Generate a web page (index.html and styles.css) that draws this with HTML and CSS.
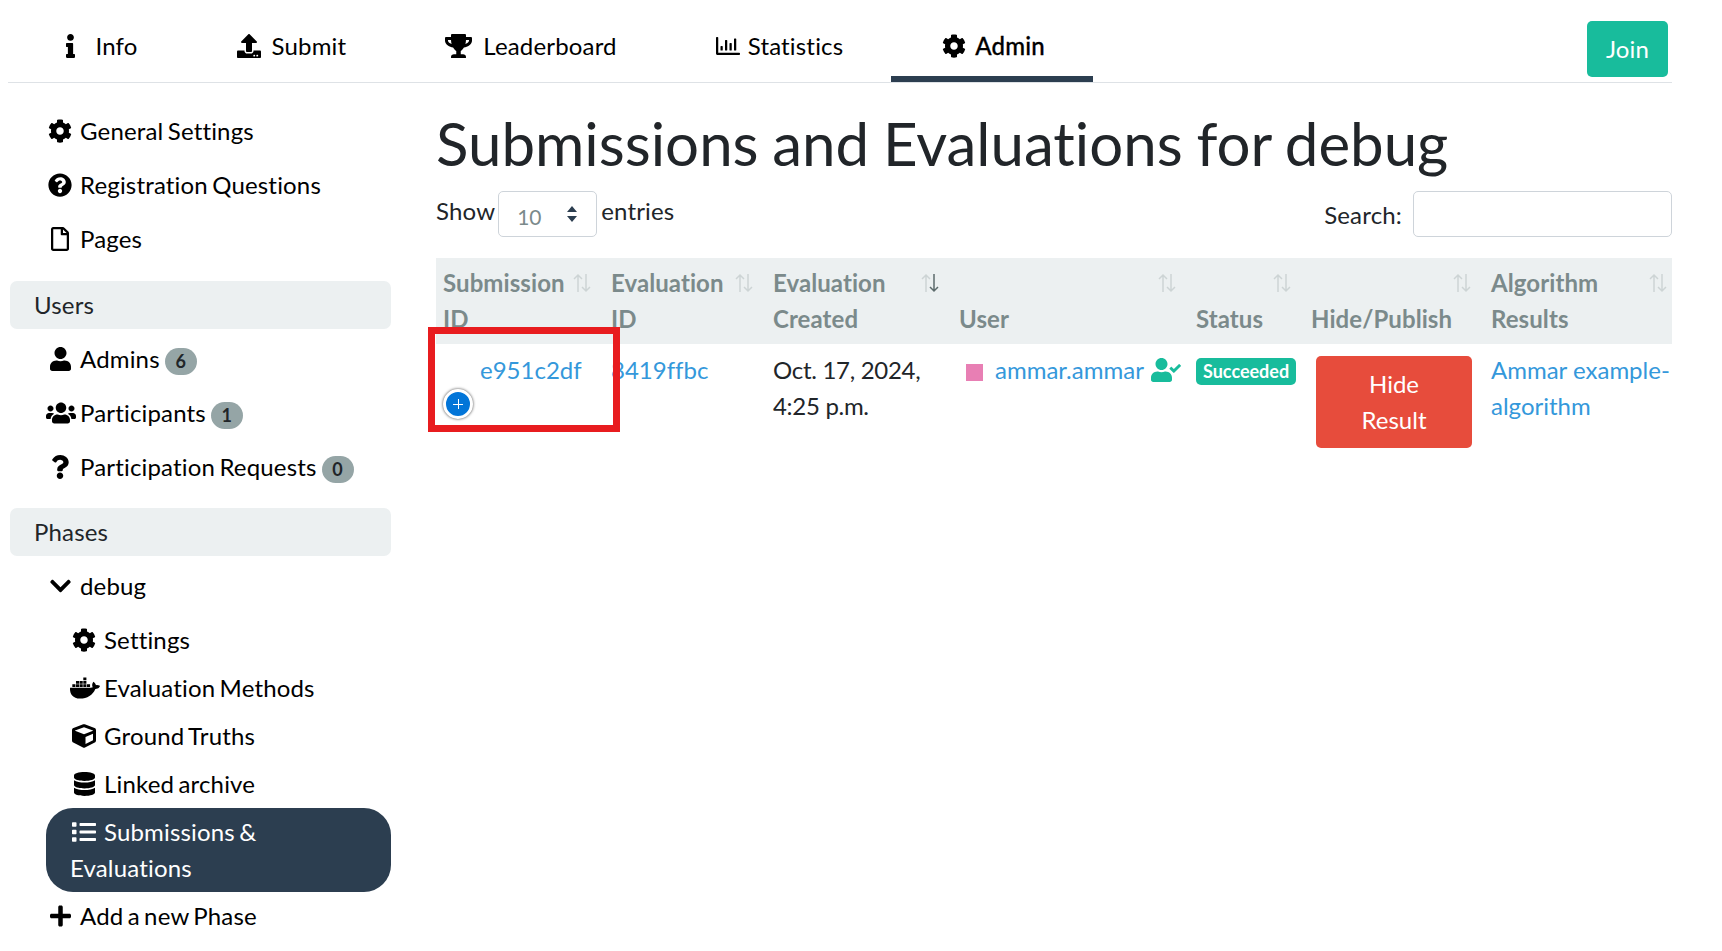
FILE: index.html
```html
<!DOCTYPE html>
<html lang="en">
<head>
<meta charset="utf-8">
<title>Submissions and Evaluations for debug</title>
<link rel="stylesheet" href="styles.css">
</head>
<body>
<svg class="defs" aria-hidden="true">
<defs>
<path id="cog" d="M487.4 315.7l-42.6-24.6c4.3-23.2 4.3-47 0-70.2l42.6-24.6c4.9-2.8 7.1-8.6 5.5-14-11.1-35.6-30-67.8-54.7-94.6-3.8-4.1-10-5.1-14.8-2.3L380.8 110c-17.9-15.4-38.5-27.3-60.8-35.1V25.8c0-5.6-3.9-10.5-9.4-11.7-36.7-8.2-74.3-7.8-109.2 0-5.5 1.2-9.4 6.1-9.4 11.7V75c-22.2 7.9-42.8 19.8-60.8 35.1L88.7 85.5c-4.9-2.8-11-1.9-14.8 2.3-24.7 26.7-43.6 58.9-54.7 94.6-1.7 5.4.6 11.2 5.5 14L67.3 221c-4.3 23.2-4.3 47 0 70.2l-42.6 24.6c-4.9 2.8-7.1 8.6-5.5 14 11.1 35.6 30 67.8 54.7 94.6 3.8 4.1 10 5.1 14.8 2.3l42.6-24.6c17.9 15.4 38.5 27.3 60.8 35.1v49.2c0 5.6 3.9 10.5 9.4 11.7 36.7 8.2 74.3 7.8 109.2 0 5.5-1.2 9.4-6.1 9.4-11.7v-49.2c22.2-7.9 42.8-19.8 60.8-35.1l42.6 24.6c4.9 2.8 11 1.9 14.8-2.3 24.7-26.7 43.6-58.9 54.7-94.6 1.5-5.5-.7-11.3-5.6-14.1zM256 336c-44.1 0-80-35.9-80-80s35.9-80 80-80 80 35.9 80 80-35.9 80-80 80z"/>
<path id="info" d="M20 424.229h20V279.771H20c-11.046 0-20-8.954-20-20V212c0-11.046 8.954-20 20-20h112c11.046 0 20 8.954 20 20v212.229h20c11.046 0 20 8.954 20 20V492c0 11.046-8.954 20-20 20H20c-11.046 0-20-8.954-20-20v-47.771c0-11.046 8.954-20 20-20zM96 0C56.235 0 24 32.235 24 72s32.235 72 72 72 72-32.235 72-72S135.764 0 96 0z"/>
<path id="upload" d="M296 384h-80c-13.3 0-24-10.7-24-24V192h-87.7c-17.8 0-26.7-21.5-14.1-34.1L242.3 5.7c7.5-7.5 19.8-7.5 27.3 0l152.2 152.2c12.6 12.6 3.7 34.1-14.1 34.1H320v168c0 13.3-10.7 24-24 24zm216-8v112c0 13.3-10.7 24-24 24H24c-13.3 0-24-10.7-24-24V376c0-13.3 10.7-24 24-24h136v8c0 30.9 25.1 56 56 56h80c30.9 0 56-25.1 56-56v-8h136c13.3 0 24 10.7 24 24zm-124 88c0-11-9-20-20-20s-20 9-20 20 9 20 20 20 20-9 20-20zm64 0c0-11-9-20-20-20s-20 9-20 20 9 20 20 20 20-9 20-20z"/>
<path id="trophy" d="M552 64H448V24c0-13.3-10.7-24-24-24H152c-13.3 0-24 10.7-24 24v40H24C10.7 64 0 74.7 0 88v56c0 35.7 22.5 72.4 61.9 100.7 31.5 22.7 69.8 37.1 110 41.7C203.3 338.5 240 360 240 360v72h-48c-35.3 0-64 20.7-64 56v12c0 6.6 5.4 12 12 12h296c6.6 0 12-5.4 12-12v-12c0-35.3-28.7-56-64-56h-48v-72s36.7-21.5 68.1-73.6c40.3-4.6 78.6-19 110-41.7 39.3-28.3 61.9-65 61.9-100.7V88c0-13.3-10.7-24-24-24zM99.3 192.8C74.9 175.2 64 155.6 64 144v-16h64.2c1 32.6 5.8 61.2 12.8 86.2-15.1-5.2-29.2-12.4-41.7-21.4zM512 144c0 16.1-17.7 36.1-35.3 48.8-12.5 9-26.7 16.2-41.8 21.4 7-25 11.8-53.6 12.8-86.2H512v16z"/>
<path id="chart" d="M396.8 352h22.4c6.4 0 12.8-6.4 12.8-12.8V108.8c0-6.4-6.4-12.8-12.8-12.8h-22.4c-6.4 0-12.8 6.4-12.8 12.8v230.4c0 6.4 6.4 12.8 12.8 12.8zm-192 0h22.4c6.4 0 12.8-6.4 12.8-12.8V140.8c0-6.4-6.4-12.8-12.8-12.8h-22.4c-6.4 0-12.8 6.4-12.8 12.8v198.4c0 6.4 6.4 12.8 12.8 12.8zm96 0h22.4c6.4 0 12.8-6.4 12.8-12.8V204.8c0-6.4-6.4-12.8-12.8-12.8h-22.4c-6.4 0-12.8 6.4-12.8 12.8v134.4c0 6.4 6.4 12.8 12.8 12.8zM496 400H48V80c0-8.84-7.16-16-16-16H16C7.16 64 0 71.16 0 80v336c0 17.67 14.33 32 32 32h464c8.84 0 16-7.16 16-16v-16c0-8.84-7.16-16-16-16zm-387.2-48h22.4c6.4 0 12.8-6.4 12.8-12.8v-70.4c0-6.4-6.4-12.8-12.8-12.8h-22.4c-6.4 0-12.8 6.4-12.8 12.8v70.4c0 6.4 6.4 12.8 12.8 12.8z"/>
<path id="qcircle" d="M504 256c0 136.997-111.043 248-248 248S8 392.997 8 256C8 119.083 119.043 8 256 8s248 111.083 248 248zM262.655 90c-54.497 0-89.255 22.957-116.549 63.758-3.536 5.286-2.353 12.415 2.715 16.258l34.699 26.31c5.205 3.947 12.621 3.008 16.665-2.122 17.864-22.658 30.113-35.797 57.303-35.797 20.429 0 45.698 13.148 45.698 32.958 0 14.976-12.363 22.667-32.534 33.976C247.128 238.528 216 254.941 216 296v4c0 6.627 5.373 12 12 12h56c6.627 0 12-5.373 12-12v-1.333c0-28.462 83.186-29.647 83.186-106.667 0-58.002-60.165-102-116.531-102zM256 338c-25.365 0-46 20.635-46 46 0 25.364 20.635 46 46 46s46-20.636 46-46c0-25.365-20.635-46-46-46z"/>
<path id="file" d="M369.9 97.9L286 14C277 5 264.8-.1 252.1-.1H48C21.5 0 0 21.5 0 48v416c0 26.5 21.5 48 48 48h288c26.5 0 48-21.5 48-48V131.9c0-12.7-5.1-25-14.1-34zM332.1 128H256V51.9l76.1 76.1zM48 464V48h160v104c0 13.3 10.7 24 24 24h104v288H48z"/>
<path id="user" d="M224 256c70.7 0 128-57.3 128-128S294.7 0 224 0 96 57.3 96 128s57.3 128 128 128zm89.6 32h-16.7c-22.2 10.2-46.9 16-72.9 16s-50.6-5.8-72.9-16h-16.7C60.2 288 0 348.2 0 422.4V464c0 26.5 21.5 48 48 48h352c26.5 0 48-21.5 48-48v-41.6c0-74.2-60.2-134.4-134.4-134.4z"/>
<path id="users" d="M96 224c35.3 0 64-28.7 64-64s-28.7-64-64-64-64 28.7-64 64 28.7 64 64 64zm448 0c35.3 0 64-28.7 64-64s-28.7-64-64-64-64 28.7-64 64 28.7 64 64 64zm32 32h-64c-17.6 0-33.5 7.1-45.1 18.6 40.3 22.1 68.9 62 75.1 109.4h66c17.7 0 32-14.3 32-32v-32c0-35.3-28.7-64-64-64zm-256 0c61.9 0 112-50.1 112-112S381.9 32 320 32 208 82.1 208 144s50.1 112 112 112zm76.8 32h-8.3c-20.8 10-43.9 16-68.5 16s-47.6-6-68.5-16h-8.3C179.6 288 128 339.6 128 403.2V432c0 26.5 21.5 48 48 48h288c26.5 0 48-21.5 48-48v-28.8c0-63.6-51.6-115.2-115.2-115.2zm-223.7-13.4C161.5 263.1 145.6 256 128 256H64c-35.3 0-64 28.7-64 64v32c0 17.7 14.3 32 32 32h65.9c6.3-47.4 34.9-87.3 75.2-109.4z"/>
<path id="question" d="M202.021 0C122.202 0 70.503 32.703 29.914 91.026c-7.363 10.58-5.093 25.086 5.178 32.874l43.138 32.709c10.373 7.865 25.132 6.026 33.253-4.148 25.049-31.381 43.63-49.449 82.757-49.449 30.764 0 68.816 19.799 68.816 49.631 0 22.552-18.617 34.134-48.993 51.164-35.423 19.86-82.299 44.576-82.299 106.405V320c0 13.255 10.745 24 24 24h72.471c13.255 0 24-10.745 24-24v-5.773c0-42.86 125.268-44.645 125.268-160.627C377.504 66.256 286.902 0 202.021 0zM192 373.459c-38.196 0-69.271 31.075-69.271 69.271 0 38.195 31.075 69.27 69.271 69.27s69.271-31.075 69.271-69.271-31.075-69.27-69.271-69.27z"/>
<path id="chevron" d="M207.029 381.476L12.686 187.132c-9.373-9.373-9.373-24.569 0-33.941l22.667-22.667c9.357-9.357 24.522-9.375 33.901-.04L224 284.505l154.745-154.021c9.379-9.335 24.544-9.317 33.901.04l22.667 22.667c9.373 9.373 9.373 24.569 0 33.941L240.971 381.476c-9.373 9.372-24.569 9.372-33.942 0z"/>
<path id="docker" d="M349.9 236.3h-66.1v-59.4h66.1v59.4zm0-204.3h-66.1v60.7h66.1V32zm78.2 144.8H362v59.4h66.1v-59.4zm-156.3-72.1h-66.1v60.1h66.1v-60.1zm78.1 0h-66.1v60.1h66.1v-60.1zm276.8 100c-14.4-9.7-47.6-13.2-73.1-8.4-3.3-24-16.7-44.9-41.1-63.7l-14-9.3-9.3 14c-18.4 27.8-23.4 73.6-3.7 103.8-8.7 4.7-25.8 11.1-48.4 10.7H2.4c-8.7 50.8 5.8 116.8 44 162.1 37.1 43.9 92.7 66.2 165.4 66.2 157.4 0 273.9-72.5 328.4-204.2 21.4.4 67.6.1 91.3-45.2 1.5-2.5 6.6-13.2 8.5-17.1l-13.3-8.9zm-511.1-27.9h-66v59.4h66.1v-59.4zm78.1 0h-66.1v59.4h66.1v-59.4zm78.1 0h-66.1v59.4h66.1v-59.4zm-78.1-72.1h-66.1v60.1h66.1v-60.1z"/>
<path id="cube" d="M239.1 6.3l-208 78c-18.7 7-31.1 25-31.1 45v225.1c0 18.2 10.3 34.8 26.5 42.9l208 104c13.5 6.8 29.4 6.8 42.9 0l208-104c16.3-8.1 26.5-24.8 26.5-42.9V129.3c0-20-12.4-37.9-31.1-44.9l-208-78C262 2.2 250 2.2 239.1 6.3zM256 68.4l192 72v1.1l-192 78-192-78v-1.1l192-72zm32 356V275.5l160-65v133.9l-160 80z"/>
<path id="database" d="M448 73.143v45.714C448 159.143 347.667 192 224 192S0 159.143 0 118.857V73.143C0 32.857 100.333 0 224 0s224 32.857 224 73.143zM448 176v102.857C448 319.143 347.667 352 224 352S0 319.143 0 278.857V176c48.125 33.143 136.208 48.572 224 48.572S399.874 209.143 448 176zm0 160v102.857C448 479.143 347.667 512 224 512S0 479.143 0 438.857V336c48.125 33.143 136.208 48.572 224 48.572S399.874 369.143 448 336z"/>
<path id="list" d="M80 368H16a16 16 0 0 0-16 16v64a16 16 0 0 0 16 16h64a16 16 0 0 0 16-16v-64a16 16 0 0 0-16-16zm0-320H16A16 16 0 0 0 0 64v64a16 16 0 0 0 16 16h64a16 16 0 0 0 16-16V64a16 16 0 0 0-16-16zm0 160H16a16 16 0 0 0-16 16v64a16 16 0 0 0 16 16h64a16 16 0 0 0 16-16v-64a16 16 0 0 0-16-16zm416 176H176a16 16 0 0 0-16 16v32a16 16 0 0 0 16 16h320a16 16 0 0 0 16-16v-32a16 16 0 0 0-16-16zm0-320H176a16 16 0 0 0-16 16v32a16 16 0 0 0 16 16h320a16 16 0 0 0 16-16V80a16 16 0 0 0-16-16zm0 160H176a16 16 0 0 0-16 16v32a16 16 0 0 0 16 16h320a16 16 0 0 0 16-16v-32a16 16 0 0 0-16-16z"/>
<path id="plus" d="M416 208H272V64c0-17.67-14.33-32-32-32h-32c-17.67 0-32 14.33-32 32v144H32c-17.67 0-32 14.33-32 32v32c0 17.67 14.33 32 32 32h144v144c0 17.67 14.33 32 32 32h32c17.67 0 32-14.33 32-32V304h144c17.67 0 32-14.33 32-32v-32c0-17.67-14.33-32-32-32z"/>
<path id="usercheck" d="M224 256c70.7 0 128-57.3 128-128S294.7 0 224 0 96 57.3 96 128s57.3 128 128 128zm89.6 32h-16.7c-22.2 10.2-46.9 16-72.9 16s-50.6-5.8-72.9-16h-16.7C60.2 288 0 348.2 0 422.4V464c0 26.5 21.5 48 48 48h352c26.5 0 48-21.5 48-48v-41.6c0-74.2-60.2-134.4-134.4-134.4zm323-128.4l-27.8-28.1c-4.6-4.7-12.1-4.7-16.8-.1l-104.8 104-45.5-45.8c-4.6-4.7-12.1-4.7-16.8-.1l-28.1 27.9c-4.7 4.6-4.7 12.1-.1 16.8l81.7 82.3c4.6 4.7 12.1 4.7 16.8.1l141.3-140.2c4.6-4.7 4.7-12.2.1-16.8z"/>
<path id="sortup" d="M5 19V2M1 6l4-4 4 4"/>
<path id="sortdown" d="M13 1v17M9 14l4 4 4-4"/>
</defs>
</svg>

<nav class="tabs">
  <a class="tab" href="#"><svg class="ic gap-info" viewBox="0 0 192 512"><use href="#info"/></svg>Info</a>
  <a class="tab" href="#"><svg class="ic gap-s" viewBox="0 0 512 512"><use href="#upload"/></svg>Submit</a>
  <a class="tab" href="#"><svg class="ic gap-s" viewBox="0 0 576 512"><use href="#trophy"/></svg>Leaderboard</a>
  <a class="tab" href="#"><svg class="ic gap-c" viewBox="0 0 512 512"><use href="#chart"/></svg>Statistics</a>
  <a class="tab active" href="#"><svg class="ic gap-a" viewBox="0 0 512 512"><use href="#cog"/></svg>Admin</a>
  <a class="join" href="#">Join</a>
</nav>

<div class="layout">
  <aside class="side">
    <ul class="menu">
      <li class="item"><a href="#"><span class="box"><svg class="ic" viewBox="0 0 512 512"><use href="#cog"/></svg></span>General Settings</a></li>
      <li class="item"><a href="#"><span class="box"><svg class="ic" viewBox="0 0 512 512"><use href="#qcircle"/></svg></span>Registration Questions</a></li>
      <li class="item"><a href="#"><span class="box"><svg class="ic" viewBox="0 0 384 512"><use href="#file"/></svg></span>Pages</a></li>
    </ul>
    <div class="section">Users</div>
    <ul class="menu">
      <li class="item"><a href="#"><span class="box"><svg class="ic" viewBox="0 0 448 512"><use href="#user"/></svg></span>Admins<span class="pill">6</span></a></li>
      <li class="item"><a href="#"><span class="box"><svg class="ic" viewBox="0 0 640 512"><use href="#users"/></svg></span>Participants<span class="pill">1</span></a></li>
      <li class="item"><a href="#"><span class="box"><svg class="ic" viewBox="0 0 384 512"><use href="#question"/></svg></span>Participation Requests<span class="pill">0</span></a></li>
    </ul>
    <div class="section">Phases</div>
    <ul class="menu">
      <li class="item"><a href="#"><span class="box"><svg class="ic" viewBox="0 0 448 512"><use href="#chevron"/></svg></span>debug</a>
        <ul class="submenu">
          <li class="sub first"><a href="#"><span class="box"><svg class="ic" viewBox="0 0 512 512"><use href="#cog"/></svg></span>Settings</a></li>
          <li class="sub"><a href="#"><span class="box"><svg class="ic" viewBox="0 0 640 512"><use href="#docker"/></svg></span>Evaluation Methods</a></li>
          <li class="sub"><a href="#"><span class="box"><svg class="ic" viewBox="0 0 512 512"><use href="#cube"/></svg></span>Ground Truths</a></li>
          <li class="sub"><a href="#"><span class="box"><svg class="ic" viewBox="0 0 448 512"><use href="#database"/></svg></span>Linked archive</a></li>
          <li class="sub current"><a href="#"><span class="box"><svg class="ic" viewBox="0 0 512 512"><use href="#list"/></svg></span>Submissions &amp; Evaluations</a></li>
        </ul>
      </li>
      <li class="item add"><a href="#"><span class="box"><svg class="ic" viewBox="0 0 448 512"><use href="#plus"/></svg></span>Add a new Phase</a></li>
    </ul>
  </aside>

  <main class="main">
    <h1 class="title">Submissions and Evaluations for debug</h1>
    <div class="controls">
      <label class="length"><span class="lbl">Show</span>
        <span class="selectwrap">
          <select class="select"><option>10</option></select>
          <svg class="caret" viewBox="0 0 12 18"><path d="M6 1l5 6H1zM6 17l5-6H1z"/></svg>
        </span>
        <span class="lbl">entries</span></label>
      <label class="search">Search:<input class="searchbox" type="search"></label>
    </div>
    <div class="tablewrap">
      <table class="grid">
        <colgroup>
          <col class="c1"><col class="c2"><col class="c3"><col class="c4"><col class="c5"><col class="c6"><col class="c7">
        </colgroup>
        <thead>
          <tr>
            <th>Submission ID<svg class="sort" viewBox="0 0 18 20"><use href="#sortup"/><use href="#sortdown"/></svg></th>
            <th>Evaluation ID<svg class="sort" viewBox="0 0 18 20"><use href="#sortup"/><use href="#sortdown"/></svg></th>
            <th>Evaluation Created<svg class="sort" viewBox="0 0 18 20"><use href="#sortup"/><use class="sorted" href="#sortdown"/></svg></th>
            <th class="low">User<svg class="sort" viewBox="0 0 18 20"><use href="#sortup"/><use href="#sortdown"/></svg></th>
            <th class="low">Status<svg class="sort" viewBox="0 0 18 20"><use href="#sortup"/><use href="#sortdown"/></svg></th>
            <th class="low">Hide/Publish<svg class="sort" viewBox="0 0 18 20"><use href="#sortup"/><use href="#sortdown"/></svg></th>
            <th class="last">Algorithm Results<svg class="sort" viewBox="0 0 18 20"><use href="#sortup"/><use href="#sortdown"/></svg></th>
          </tr>
        </thead>
        <tbody>
          <tr>
            <td class="idcell"><span class="control"></span><a href="#">e951c2df</a></td>
            <td><a href="#">8419ffbc</a></td>
            <td class="date">Oct. 17, 2024, 4:25 p.m.</td>
            <td class="usercell"><span class="avatar"></span><a href="#">ammar.ammar</a><svg class="ic verified" viewBox="0 0 640 512"><use href="#usercheck"/></svg></td>
            <td><span class="status">Succeeded</span></td>
            <td><a class="hide" href="#">Hide Result</a></td>
            <td class="algo"><a href="#">Ammar example-algorithm</a></td>
          </tr>
        </tbody>
      </table>
      <div class="highlight"></div>
    </div>
  </main>
</div>
</body>
</html>
```
FILE: styles.css
```css
* { box-sizing: border-box; }
html, body { margin: 0; padding: 0; background: #fff; }
body {
  height: 951px;
  overflow: hidden;
  padding: 0 50px 0 8px;
  font-family: Lato, "Liberation Sans", sans-serif;
  font-size: 24px;
  line-height: 36px;
  color: #212529;
  font-variant-ligatures: none;
  letter-spacing: 0.17px;
  word-spacing: -2px;
}
a { text-decoration: none; color: #3498db; }
.defs { display: none; }
.ic { height: 24px; width: auto; fill: currentColor; vertical-align: -3px; }

.tabs {
  display: flex;
  align-items: flex-start;
  height: 83px;
  padding-left: 7px;
  border-bottom: 1px solid #dee2e6;
}
.tab {
  display: block;
  height: 82px;
  padding: 28px 49.5px 0;
  color: #000;
}
.tab.active {
  margin-left: -2px;
  padding-left: 51.5px;
  padding-right: 48.5px;
  border-bottom: 6px solid #2c3e50;
  font-weight: 500;
  -webkit-text-stroke: 0.3px #000;
}
.gap-info { margin-right: 21px; margin-left: 1px; }
.gap-s { margin-right: 11px; }
.gap-c { margin-right: 8px; }
.gap-a { margin-right: 9px; }
.join {
  margin: 21px 4px 0 auto;
  width: 81px;
  height: 56px;
  line-height: 56px;
  text-align: center;
  color: #fff;
  background: #18bc9c;
  border-radius: 5px;
}

.layout { display: flex; gap: 45px; }
.side { width: 381px; margin-left: 2px; flex: none; padding-top: 21px; }
.menu, .submenu { list-style: none; margin: 0; padding: 0; }
.item > a { display: block; padding: 9px 0 9px 36px; color: #000; }
.box { display: inline-block; width: 30px; margin-right: 4px; padding-right: 2px; text-align: center; }
.section {
  margin: 15px 0 3px;
  padding: 6px 24px;
  background: #ecf0f1;
  border-radius: 7px;
}
.section + .menu + .section { margin-top: 14px; }
.pill {
  display: inline-block;
  width: 32px;
  height: 27px;
  margin-left: 5px;
  font-size: 18px;
  line-height: 27px;
  font-weight: 700;
  text-align: center;
  vertical-align: 0;
  color: #212529;
  background: #95a5a6;
  border-radius: 14px;
}
.submenu { margin-left: 36px; }
.sub > a { display: block; padding: 6px 24px; color: #000; }
.sub.first > a { padding-top: 9px; }
.current > a { color: #fff; background: #2c3e50; border-radius: 27px; }
.item.add > a { padding-top: 6px; }

.main { flex: 1; min-width: 0; }
.title {
  margin: 24px 0 12px;
  font-size: 60px;
  line-height: 72px;
  font-weight: 400;
  letter-spacing: 0;
  word-spacing: -1.65px;
  color: #212529;
}
.controls { display: flex; justify-content: space-between; align-items: flex-start; height: 67px; }
.selectwrap { position: relative; display: block; flex: none; margin: 0 4px 0 3px; }
.select {
  appearance: none;
  display: block;
  width: 99px;
  height: 46px;
  padding: 4px 18px 0;
  font: 21px Lato, "Liberation Sans", sans-serif;
  color: #7b8a8b;
  background: #fff;
  border: 1px solid #ced4da;
  border-radius: 5px;
}
.caret { position: absolute; left: 68px; top: 14px; width: 12px; height: 18px; fill: #2c3e50; }
.length { display: flex; }
.lbl { padding-top: 2px; }
.search { display: flex; align-items: center; gap: 11px; padding-top: 2px; }
.searchbox {
  width: 259px;
  height: 46px;
  margin-top: -2px;
  background: #fff;
  border: 1px solid #ced4da;
  border-radius: 5px;
}

.tablewrap { position: relative; }
.grid { width: 1236px; table-layout: fixed; border-collapse: collapse; }
.c1 { width: 168px; }
.c2 { width: 162px; }
.c3 { width: 186px; }
.c4 { width: 237px; }
.c5 { width: 115px; }
.c6 { width: 180px; }
.c7 { width: 188px; }
th {
  position: relative;
  padding: 7px 36px 7px 7px;
  text-align: left;
  font-weight: 700;
  letter-spacing: 0.08px;
  color: #7b8a8b;
  background: #ecf0f1;
  vertical-align: top;
}
th.low { vertical-align: bottom; padding-right: 7px; }
th.last .sort { right: 5px; }
.sort {
  position: absolute;
  top: 15px;
  right: 13px;
  width: 18px;
  height: 20px;
  fill: none;
  stroke: #cdd4d5;
  stroke-width: 1.5;
}
.sorted { stroke: #5c6b6c; }
td { padding: 8px 0 8px 7px; vertical-align: top; color: #212529; letter-spacing: 0; word-spacing: 0; }
td.date { letter-spacing: -0.3px; }
.idcell { position: relative; padding-left: 44px; }
.control {
  position: absolute;
  left: 7px;
  top: 45px;
  width: 30px;
  height: 30px;
  border-radius: 50%;
  background: #0275d8;
  border: 3px solid #fff;
  box-shadow: 0 0 3px #444;
}
.control::before, .control::after {
  content: "";
  position: absolute;
  background: #fff;
}
.control::before { left: 7px; right: 7px; top: 11.5px; height: 1px; }
.control::after { top: 7px; bottom: 7px; left: 11.5px; width: 1px; }
.usercell { white-space: nowrap; }
.avatar {
  display: inline-block;
  width: 17px;
  height: 17px;
  margin: 0 12px 0 7px;
  vertical-align: -2px;
  background: #e87fb4;
}
.verified { margin-left: 7px; color: #18bc9c; }
.status {
  display: inline-block;
  height: 27px;
  padding: 0 7px;
  font-size: 18px;
  line-height: 27px;
  font-weight: 700;
  color: #fff;
  background: #18bc9c;
  border-radius: 5px;
  vertical-align: 1px;
}
.hide {
  display: block;
  width: 156px;
  margin: 4px 0 0 5px;
  padding: 10px 24px;
  text-align: center;
  color: #fff;
  background: #e74c3c;
  border-radius: 5px;
}
.highlight {
  position: absolute;
  left: -8px;
  top: 69px;
  width: 192px;
  height: 105px;
  border: 7px solid #e81c1f;
  pointer-events: none;
}
```
